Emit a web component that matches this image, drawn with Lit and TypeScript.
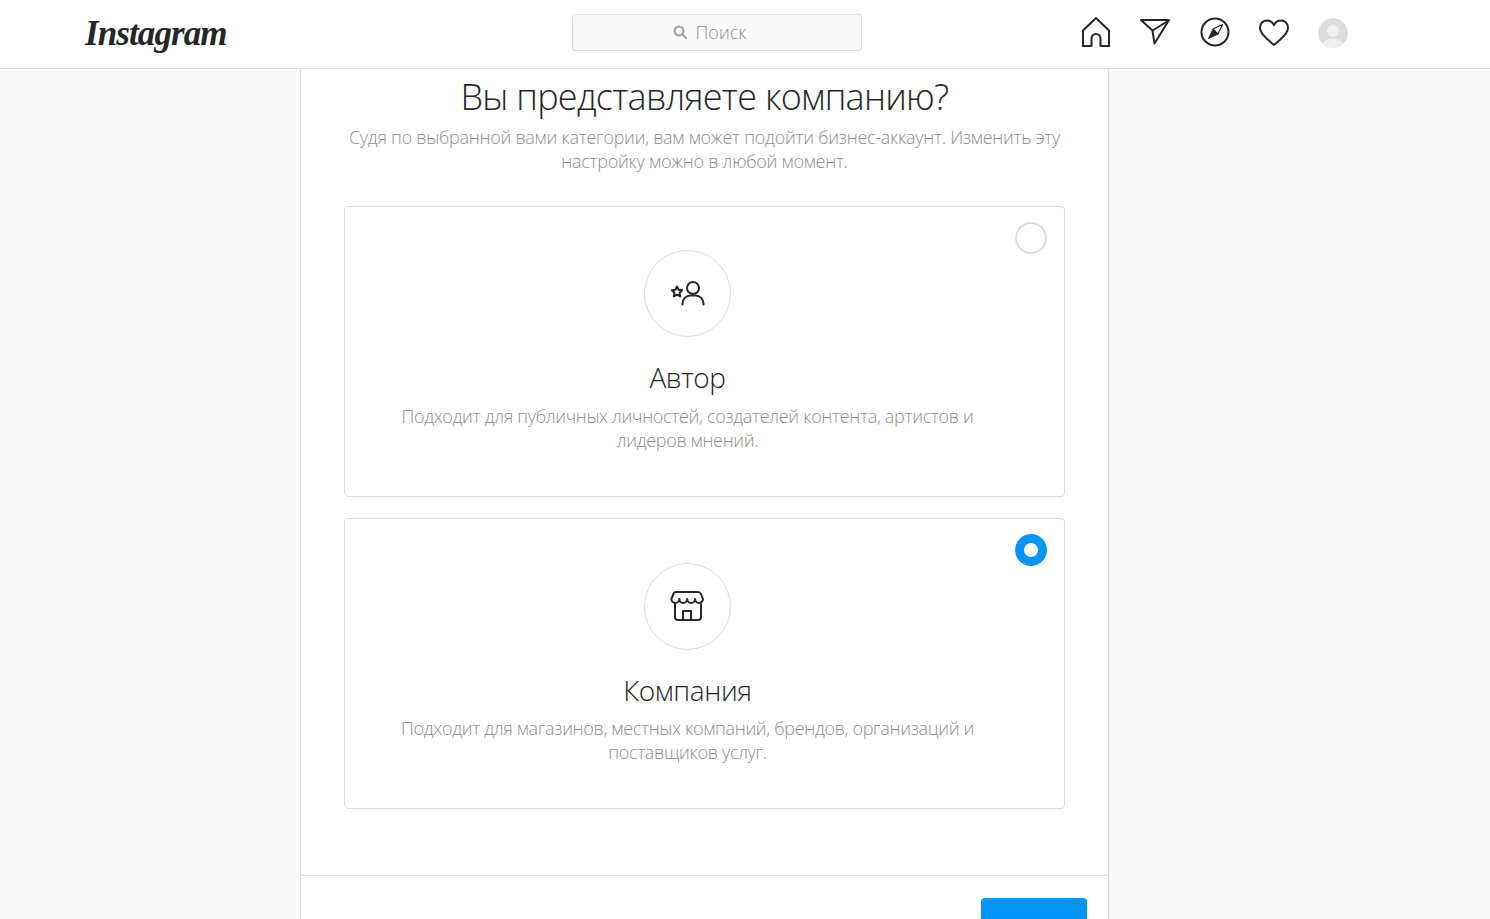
import { LitElement, html, css } from "lit";
import { customElement } from "lit/decorators.js";

@customElement("app-root")
export class AppRoot extends LitElement {
  static styles = css`
    :host { display: block; height: 919px; overflow: hidden; background: #fafafa; font-family: "Open Sans", "Noto Sans", sans-serif; font-weight: 300; }
    .top { box-sizing: border-box; height: 69px; background: #fff; border-bottom: 1px solid #dbdbdb; display: flex; align-items: flex-start; padding-left: 85px; }
    .logo { width: 487px; flex: none; font-family: "Liberation Serif", serif; font-style: italic; font-weight: 700; font-size: 35px; line-height: 44px; letter-spacing: -0.9px; color: #262626; padding-top: 12px; }
    .search { box-sizing: border-box; margin-top: 14px; width: 290px; height: 37px; flex: none; background: #fafafa; border: 1px solid #dbdbdb; border-radius: 3px; display: flex; align-items: center; justify-content: center; gap: 8px; color: #8e8e8e; font-size: 18px; line-height: 24px; padding: 0 14px 2px 0; }
    .search svg { width: 14px; height: 14px; }
    .nav { display: flex; gap: 29.3px; margin-left: 219px; margin-top: 16px; }
    .nav svg { display: block; width: 30px; height: 32px; fill: none; stroke: #262626; stroke-width: 2; stroke-linejoin: round; }
    .nav svg.ava { width: 30px; height: 30px; border-radius: 50%; margin-top: 2px; stroke: none; }
    .main { box-sizing: border-box; width: 809px; height: 850px; margin-left: 300px; background: #fff; border-left: 1px solid #dbdbdb; border-right: 1px solid #dbdbdb; display: flex; flex-direction: column; }
    h1 { margin: 0; text-align: center; font-size: 36px; font-weight: 300; line-height: 56px; color: #262626; letter-spacing: -0.72px; }
    .sub { margin: 0 auto; width: 730px; text-align: center; font-size: 18px; line-height: 24px; color: #8e8e8e; letter-spacing: -0.27px; }
    .cards { margin: 33px 43px 0; display: flex; flex-direction: column; gap: 21px; }
    .card { box-sizing: border-box; height: 291px; position: relative; border: 1px solid #dbdbdb; border-radius: 4px; padding: 43px 34px 0 0; display: flex; flex-direction: column; align-items: center; }
    .card + .card { padding-top: 44px; }
    .circle { box-sizing: border-box; width: 87px; height: 87px; border-radius: 50%; border: 1px solid #dbdbdb; display: flex; align-items: center; justify-content: center; }
    .circle svg { width: 87px; height: 87px; flex: none; fill: none; stroke: #262626; stroke-width: 2; stroke-linejoin: round; stroke-linecap: round; }
    h2 { margin: 20px 0 0; font-size: 28px; font-weight: 300; line-height: 40px; color: #262626; letter-spacing: -0.4px; }
    .desc { margin: 7px 0 0; width: 620px; text-align: center; font-size: 18px; line-height: 24px; color: #8e8e8e; letter-spacing: -0.32px; }
    .card + .card .desc { margin-top: 6px; }
    .radio { position: absolute; top: 15px; right: 17px; box-sizing: border-box; width: 32px; height: 32px; border-radius: 50%; border: 2px solid #dbdbdb; }
    .radio.on { border: none; background: #0095f6; display: flex; align-items: center; justify-content: center; }
    .dot { width: 14px; height: 14px; border-radius: 50%; background: #fff; }
    .foot { margin-top: 66px; border-top: 1px solid #dbdbdb; padding: 22px 21px 0 0; display: flex; justify-content: flex-end; }
    .btn { width: 106px; height: 60px; background: #0095f6; border: none; border-radius: 4px; flex: none; }
  `;

  render() {
    return html`
      <div class="top">
        <div class="logo">Instagram</div>
        <div class="search">
          <svg viewBox="0 0 14 14" fill="none" stroke="#a8a8a8" stroke-width="2.4"><circle cx="6" cy="6" r="4.4"/><path d="M9.4 9.4 13 13" stroke-linecap="round"/></svg>
          <span>Поиск</span>
        </div>
        <div class="nav">
          <svg viewBox="0 0 30 32"><path d="M2 30V14.500L15 2l13 12.500V30h-8.500v-7.500a4.500 4.500 0 0 0-9 0V30z"/></svg>
          <svg viewBox="0 0 30 32"><path d="M1 4h28L14.500 27.500 12.500 14.500z"/><path d="M12.500 14.500 28 5"/></svg>
          <svg viewBox="0 0 30 32"><circle cx="15" cy="16" r="13.500"/><path d="M22.500 8.500 18 18 13 13z" stroke-width="1.200"/><path d="M8.500 22.500 13 13l5 5z" fill="#262626" stroke-width="1"/></svg>
          <svg viewBox="0 0 30 32"><path d="M15 29C8 23 1 17.500 1 11.500 1 7.500 4 4.500 8 4.500c3 0 5.500 1.500 7 4.500 1.500-3 4-4.500 7-4.500 4 0 7 3 7 7 0 6-7 11.500-14 17.500z"/></svg>
          <svg class="ava" viewBox="0 0 30 30"><defs><clipPath id="c"><circle cx="15" cy="15" r="15"/></clipPath></defs><g clip-path="url(#c)"><rect width="30" height="30" fill="#dcdcdc"/><circle cx="15" cy="13" r="6" fill="#f0f0f0"/><ellipse cx="15" cy="28" rx="11" ry="7.500" fill="#f0f0f0"/></g></svg>
        </div>
      </div>
      <div class="main">
        <h1>Вы представляете компанию?</h1>
        <p class="sub">Судя по выбранной вами категории, вам может подойти бизнес-аккаунт. Изменить эту настройку можно в любой момент.</p>
        <div class="cards">
          <div class="card">
            <div class="radio"></div>
            <div class="circle">
              <svg viewBox="0 0 87 87"><circle cx="49" cy="38" r="6"/><path d="M38.500 54.500v-1a8 8 0 0 1 8-8h5a8 8 0 0 1 8 8v1"/><path stroke-width="2" d="M33 36.500l1.600 3.300 3.600.5-2.600 2.500.6 3.600-3.200-1.700-3.200 1.700.6-3.600-2.600-2.500 3.600-.5z"/></svg>
            </div>
            <h2>Автор</h2>
            <p class="desc">Подходит для публичных личностей, создателей контента, артистов и лидеров мнений.</p>
          </div>
          <div class="card">
            <div class="radio on"><div class="dot"></div></div>
            <div class="circle">
              <svg viewBox="0 0 87 87"><path d="M32 29H54Q56 29 57 31L59 36A3.950 3.950 0 0 1 51.100 36A3.950 3.950 0 0 1 43.200 36A3.950 3.950 0 0 1 35.300 36A3.950 3.950 0 0 1 27.400 36L29.500 31Q30 29 32 29Z"/><path d="M31 41V54a3 3 0 0 0 3 3H54a3 3 0 0 0 3-3V41"/><path d="M39 57V48H47V57"/></svg>
            </div>
            <h2>Компания</h2>
            <p class="desc">Подходит для магазинов, местных компаний, брендов, организаций и поставщиков услуг.</p>
          </div>
        </div>
        <div class="foot"><button class="btn" aria-label="Далее"></button></div>
      </div>
    `;
  }
}
